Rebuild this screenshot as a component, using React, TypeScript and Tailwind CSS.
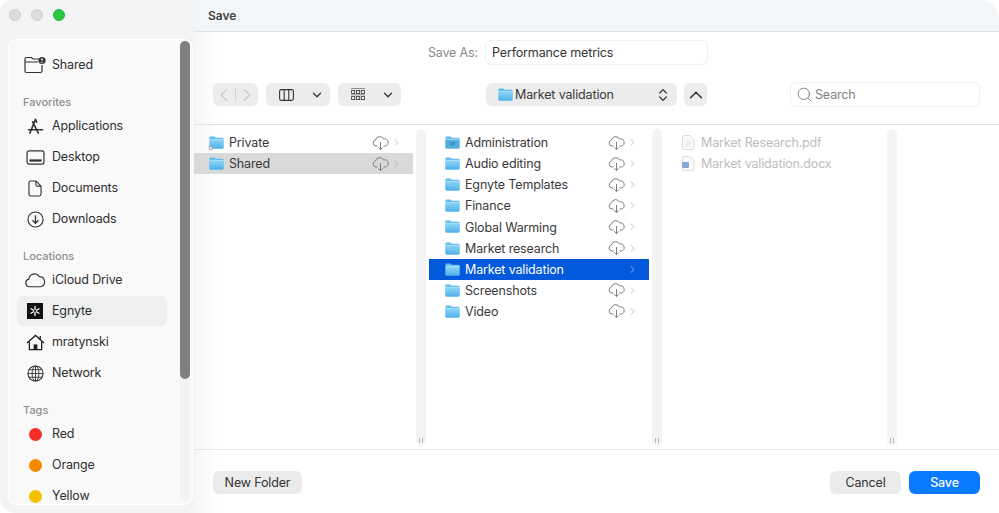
import { ChevronDown, ChevronLeft, ChevronRight, ChevronUp, ChevronsUpDown, Search } from "lucide-react";

const FolderIcon = ({ badge }: { badge?: "emblem" | "dot" }) => (
  <svg viewBox="0 0 15 13" className="w-[15px] h-[13px] shrink-0 overflow-visible">
    <defs>
      <linearGradient id="folderFill" x1="0" y1="0" x2="0" y2="1">
        <stop offset="0" stopColor="#8fd6fa" />
        <stop offset="1" stopColor="#4fb0e8" />
      </linearGradient>
    </defs>
    <path d="M1.5 0.5h4l1.3 1.3h6.7a1 1 0 0 1 1 1V11.5a1 1 0 0 1-1 1h-12a1 1 0 0 1-1-1V1.500a1 1 0 0 1 1-1z" fill="#5dbcee" />
    <path d="M0.5 3.4h14v8.1a1 1 0 0 1-1 1h-12a1 1 0 0 1-1-1z" fill={badge === "emblem" ? "#55addd" : "url(#folderFill)"} />
    <path d="M0.5 3.400h14" stroke="#c4ecff" strokeWidth="0.7" />
    {badge === "emblem" && <rect x="5" y="6" width="5" height="3.500" rx="0.800" fill="#3f93c4" />}
    {badge === "dot" && <circle cx="1.800" cy="12" r="1.800" fill="#e8e8e8" stroke="#8a8a8a" strokeWidth="0.700" />}
  </svg>
);

const CloudDown = () => (
  <svg viewBox="0 0 17 16" className="w-[17px] h-[16px] shrink-0" fill="none" stroke="#7d7d7d" strokeWidth="1">
    <path d="M5.5 11H4a3 3 0 0 1-.6-5.900A4.400 4.400 0 0 1 11.600 4 3.600 3.600 0 0 1 13.400 11H11.500" />
    <path d="M8.500 7v7.500M6.200 12.300l2.300 2.300 2.300-2.300" />
  </svg>
);

const SharedIcon = () => (
  <svg viewBox="0 0 22 18" className="w-[22px] h-[18px]" fill="none" stroke="#333" strokeWidth="1.200">
    <path d="M15 3H9L7.500 1.500H2.500a1.500 1.500 0 0 0-1.500 1.500V15a1.500 1.500 0 0 0 1.500 1.500h14A1.500 1.500 0 0 0 18 15V9" />
    <path d="M1 6h13" />
    <circle cx="18" cy="4.500" r="3.600" fill="#333" stroke="none" />
    <circle cx="18" cy="3.400" r="1" fill="#fff" stroke="none" />
    <path d="M16.400 6.400c.3-1 2.900-1 3.200 0z" fill="#fff" stroke="none" />
  </svg>
);

const AppsIcon = () => (
  <svg viewBox="0 0 18 18" className="w-[17px] h-[17px]" fill="none" stroke="#333" strokeWidth="1.700" strokeLinecap="round">
    <path d="M9 1.500 3 16M9 1.500l1.200 2.800M6 4l6 12" />
    <path d="M1.500 12.500h15" />
  </svg>
);

const DesktopIcon = () => (
  <svg viewBox="0 0 20 16" className="w-[19px] h-[15px]" fill="none" stroke="#333" strokeWidth="1.300">
    <rect x="1" y="1" width="18" height="14" rx="2.200" />
    <rect x="3.500" y="10" width="13" height="2.400" fill="#333" stroke="none" />
  </svg>
);

const DocIcon = () => (
  <svg viewBox="0 0 15 18" className="w-[14px] h-[17px]" fill="none" stroke="#333" strokeWidth="1.200">
    <path d="M2.500 1h6L14 6.500V15a2 2 0 0 1-2 2H3a2 2 0 0 1-2-2V2.500A1.500 1.500 0 0 1 2.500 1z" />
    <path d="M8.500 1v4a1.500 1.500 0 0 0 1.500 1.500h4" />
  </svg>
);

const DownloadsIcon = () => (
  <svg viewBox="0 0 18 18" className="w-[17px] h-[17px]" fill="none" stroke="#333" strokeWidth="1.200">
    <circle cx="9" cy="9" r="8" />
    <path d="M9 4.500v8.500M5.800 9.800 9 13l3.200-3.200" strokeWidth="1.300" />
  </svg>
);

const CloudIcon = () => (
  <svg viewBox="0 0 22 15" className="w-[21px] h-[15px]" fill="none" stroke="#333" strokeWidth="1.200">
    <path d="M6 14H5a4 4 0 0 1-1-7.900A6 6 0 0 1 15 3.400 5.400 5.400 0 0 1 16.500 14z" />
  </svg>
);

const EgnyteIcon = () => (
  <span className="w-4 h-4 bg-[#111] flex items-center justify-center">
    <svg viewBox="0 0 16 16" className="w-4 h-4" stroke="#fff" strokeWidth="1.300" strokeLinecap="round">
      <path d="M8 3.500v3M8 9.500v3M4 5.800l2.600 1.500M12 5.800 9.400 7.300M4 10.200l2.600-1.500M12 10.200 9.400 8.700" />
    </svg>
  </span>
);

const HomeIcon = () => (
  <svg viewBox="0 0 20 18" className="w-[19px] h-[17px]" fill="none" stroke="#222" strokeWidth="1.400">
    <path d="M1 9.500 10 1.500l9 8M15 5.500V2" />
    <path d="M3.500 8v8.500h13V8" />
    <rect x="8" y="11" width="4" height="5.500" fill="#222" stroke="none" />
  </svg>
);

const GlobeIcon = () => (
  <svg viewBox="0 0 18 18" className="w-[17px] h-[17px]" fill="none" stroke="#333" strokeWidth="0.950">
    <circle cx="9" cy="9" r="8" strokeWidth="1.200" />
    <ellipse cx="9" cy="9" rx="3.600" ry="8" />
    <path d="M9 1v16M1 9h16M2.300 5h13.400M2.300 13h13.400" />
  </svg>
);

const ColumnsIcon = () => (
  <svg viewBox="0 0 15 12" className="w-[15px] h-[12px]" fill="none" stroke="#333" strokeWidth="1.100">
    <rect x="0.600" y="0.600" width="13.800" height="10.800" rx="1.800" />
    <path d="M5.200 0.600v10.800M9.800 0.600v10.800" />
  </svg>
);

const GridIcon = () => (
  <svg viewBox="0 0 14 13" className="w-[14px] h-[13px]" fill="none" stroke="#333" strokeWidth="0.800">
    <path d="M0 0.500h14" stroke="#777" />
    <rect x="0.600" y="2.400" width="3.200" height="3" />
    <rect x="5.400" y="2.400" width="3.200" height="3" />
    <rect x="10.200" y="2.400" width="3.200" height="3" />
    <path d="M0 6.800h14" stroke="#777" />
    <rect x="0.600" y="8.600" width="3.200" height="3" />
    <rect x="5.400" y="8.600" width="3.200" height="3" />
    <rect x="10.200" y="8.600" width="3.200" height="3" />
  </svg>
);

const FileIcon = ({ word }: { word?: boolean }) => (
  <svg viewBox="0 0 13 15" className="w-[13px] h-[15px] shrink-0" fill="#fafafa" stroke="#d4d4d4" strokeWidth="0.800">
    <path d="M2 .5h6L12 4.500V13a1.500 1.500 0 0 1-1.500 1.500h-8.500A1.500 1.500 0 0 1 .5 13V2A1.500 1.500 0 0 1 2 .5z" />
    {word ? (
      <rect x="0" y="6" width="7" height="6" rx="1" fill="#8aa9d8" stroke="none" />
    ) : (
      <path d="M3 7h6M3 9h6M3 11h4" stroke="#dddddd" />
    )}
  </svg>
);

const SideItem = ({ icon, label, active }: { icon: React.ReactNode; label: string; active?: boolean }) => (
  <div className={`h-[30px] mb-px ml-2 w-[150px] flex items-center rounded-md ${active ? "bg-[#eeefef]" : ""}`}>
    <span className="w-[35px] pl-px flex justify-center items-center">{icon}</span>
    <span className="text-[#2f2f2f]">{label}</span>
  </div>
);

const SideHeading = ({ label }: { label: string }) => (
  <div className="h-[17px] ml-[14px] flex items-center text-[11px] tracking-normal font-medium text-[#8f8f8f]">{label}</div>
);

const Dot = ({ className }: { className: string }) => <span className={`w-[13px] h-[13px] rounded-full ${className}`} />;

const FolderRow = ({ name, selected, dim, inset, badge }: { name: string; selected?: boolean; dim?: boolean; inset?: boolean; badge?: "emblem" | "dot" }) => (
  <div className={`h-[21.100px] flex items-center pr-[11px] ${inset ? "pl-4" : "pl-[15px]"} ${selected ? "bg-[#0359dc] text-white" : dim ? "bg-[#d9d9d9] text-[#3a3a3a]" : "text-[#3a3a3a]"}`}>
    <FolderIcon badge={badge} />
    <span className="ml-[5px] mt-[2px] flex-1">{name}</span>
    {!selected && <CloudDown />}
    <ChevronRight size={11} strokeWidth={1.5} className={`ml-[2px] ${selected ? "text-[#c5d8f7]" : "text-[#a8a8a8]"}`} />
  </div>
);

const Track = () => (
  <div className="w-[10px] h-[317px] mt-1 rounded-[5px] bg-[#f4f4f4] flex items-end justify-center pb-[2px] gap-[2px]">
    <span className="w-px h-[5px] mb-[1px] bg-[#b5b5b5]" />
    <span className="w-px h-[5px] mb-[1px] bg-[#b5b5b5]" />
  </div>
);

const ToolBtn = ({ className, children }: { className: string; children: React.ReactNode }) => (
  <div className={`h-[23px] rounded-[6px] bg-[#ececec] flex items-center ${className}`}>{children}</div>
);

const col1 = ["Private", "Shared"];
const col2 = [
  "Administration",
  "Audio editing",
  "Egnyte Templates",
  "Finance",
  "Global Warming",
  "Market research",
  "Market validation",
  "Screenshots",
  "Video",
];

export default function App() {
  return (
    <div className="w-[999px] h-[513px] bg-white overflow-hidden flex text-[12.500px] tracking-[-0.15px] font-['Inter',sans-serif]">
      {/* sidebar */}
      <div className="w-[194px] h-full bg-[#f4f4f4] rounded-bl-[16px] rounded-tl-[12px] pl-2 flex flex-col shrink-0">
        <div className="h-[29px] pl-px flex items-center gap-[10px]">
          <span className="w-3 h-3 rounded-full bg-[#dcdcdc] border border-[#d0d0d0]" />
          <span className="w-3 h-3 rounded-full bg-[#dcdcdc] border border-[#d0d0d0]" />
          <span className="w-3 h-3 rounded-full bg-[#28c840] border border-[#22b838]" />
        </div>
        <div className="relative mt-[10px] w-[185px] h-[466px] bg-[#f9f9f9] rounded-[8px] border border-white overflow-hidden">
          <div className="pt-[10px]">
            <SideItem icon={<SharedIcon />} label="Shared" />
            <div className="h-[13px]" />
            <SideHeading label="Favorites" />
            <SideItem icon={<AppsIcon />} label="Applications" />
            <SideItem icon={<DesktopIcon />} label="Desktop" />
            <SideItem icon={<DocIcon />} label="Documents" />
            <SideItem icon={<DownloadsIcon />} label="Downloads" />
            <div className="h-[13px]" />
            <SideHeading label="Locations" />
            <SideItem icon={<CloudIcon />} label="iCloud Drive" />
            <SideItem icon={<EgnyteIcon />} label="Egnyte" active />
            <SideItem icon={<HomeIcon />} label="mratynski" />
            <SideItem icon={<GlobeIcon />} label="Network" />
            <div className="h-[13px]" />
            <SideHeading label="Tags" />
            <SideItem icon={<Dot className="bg-[#f62c26]" />} label="Red" />
            <SideItem icon={<Dot className="bg-[#f48a00]" />} label="Orange" />
            <SideItem icon={<Dot className="bg-[#f5c000]" />} label="Yellow" />
          </div>
          {/* scrollbar */}
          <div className="absolute right-[2px] top-[1px] bottom-[2px] w-[10px] rounded-[5px] bg-[#f2f2f2]">
            <div className="h-[338px] rounded-[5px] bg-[#808080]" />
          </div>
        </div>
      </div>

      {/* main */}
      <div className="flex-1 flex flex-col min-w-0 bg-[linear-gradient(90deg,#f6f6f6,#ffffff_24px)]">
        <div className="h-[32px] shrink-0 pl-[14px] flex items-center bg-[#f3f6f9] border-b border-[#dfe2e5] rounded-tr-[20px] text-[12px] tracking-normal font-semibold text-[#444]">
          Save
        </div>
        <div className="pt-[8px] h-[51px] shrink-0 flex">
          <div className="w-[284px] h-[25px] pt-[2px] flex items-center justify-end text-[#8a8a8a]">Save As:</div>
          <div className="ml-[7px] w-[223px] h-[25px] pl-[6px] pt-[2px] flex items-center rounded-[6px] border border-[#f0f0f0] bg-white text-[#333]">
            Performance metrics
          </div>
        </div>
        <div className="h-[42px] shrink-0 pl-[19px] flex items-start border-b border-[#e2e2e2]">
          <ToolBtn className="w-[45px] justify-center">
            <ChevronLeft size={22} strokeWidth={1} className="text-[#a8a8a8]" />
            <span className="w-px h-[13px] bg-[#d2d2d2]" />
            <ChevronRight size={22} strokeWidth={1} className="text-[#a8a8a8]" />
          </ToolBtn>
          <ToolBtn className="ml-2 w-[64px] pl-[13px] pr-[6px] justify-between">
            <ColumnsIcon />
            <ChevronDown size={14} strokeWidth={2.2} className="text-[#333]" />
          </ToolBtn>
          <ToolBtn className="ml-2 w-[63px] pl-[13px] pr-[6px] justify-between">
            <GridIcon />
            <ChevronDown size={14} strokeWidth={2.2} className="text-[#333]" />
          </ToolBtn>
          <ToolBtn className="ml-[85px] w-[191px] pl-[12px] pr-[6px]">
            <FolderIcon />
            <span className="ml-[2px] mt-[2px] flex-1 text-[#3a3a3a]">Market validation</span>
            <ChevronsUpDown size={16} strokeWidth={1.8} className="text-[#333]" />
          </ToolBtn>
          <ToolBtn className="ml-[7px] w-[23px] justify-center">
            <ChevronUp size={22} strokeWidth={1.6} className="text-[#333]" />
          </ToolBtn>
          <div className="ml-[83px] w-[190px] h-[25px] -mt-px pl-[5px] flex items-center rounded-[6px] border border-[#f0f0f0] bg-white text-[#7f7f7f]">
            <Search size={17} strokeWidth={1.3} className="text-[#777]" />
            <span className="ml-[2px] mt-[2px]">Search</span>
          </div>
        </div>

        {/* columns */}
        <div className="h-[325px] shrink-0 flex border-b border-[#e6e6e6]">
          <div className="w-[219px] pt-[7px]">
            {col1.map((name) => (
              <FolderRow key={name} name={name} dim={name === "Shared"} badge={name === "Private" ? "dot" : undefined} />
            ))}
          </div>
          <div className="w-4 pl-[3px]">
            <Track />
          </div>
          <div className="w-[220px] pt-[7px]">
            {col2.map((name) => (
              <FolderRow key={name} name={name} inset selected={name === "Market validation"} badge={name === "Administration" ? "emblem" : undefined} />
            ))}
          </div>
          <div className="w-[14px] pl-[3px]">
            <Track />
          </div>
          <div className="w-[224px] pt-[7px] pl-[19px] text-[#bdbdbd]">
            <div className="h-[21px] flex items-center gap-[6px]">
              <FileIcon />
              <span className="mt-[2px]">Market Research.pdf</span>
            </div>
            <div className="h-[21px] flex items-center gap-[6px]">
              <FileIcon word />
              <span className="mt-[2px]">Market validation.docx</span>
            </div>
          </div>
          <Track />
        </div>

        {/* footer */}
        <div className="pt-[21px] pl-[19px] pr-[19px] flex text-[#333]">
          <div className="w-[89px] h-[23px] pt-[2px] rounded-[6px] bg-[#ebebeb] flex items-center justify-center">New Folder</div>
          <div className="ml-auto w-[71px] h-[23px] pt-[2px] rounded-[6px] bg-[#ebebeb] flex items-center justify-center">Cancel</div>
          <div className="ml-2 w-[71px] h-[23px] pt-[2px] rounded-[6px] bg-[#0a7aff] text-white font-medium flex items-center justify-center">Save</div>
        </div>
      </div>
    </div>
  );
}
